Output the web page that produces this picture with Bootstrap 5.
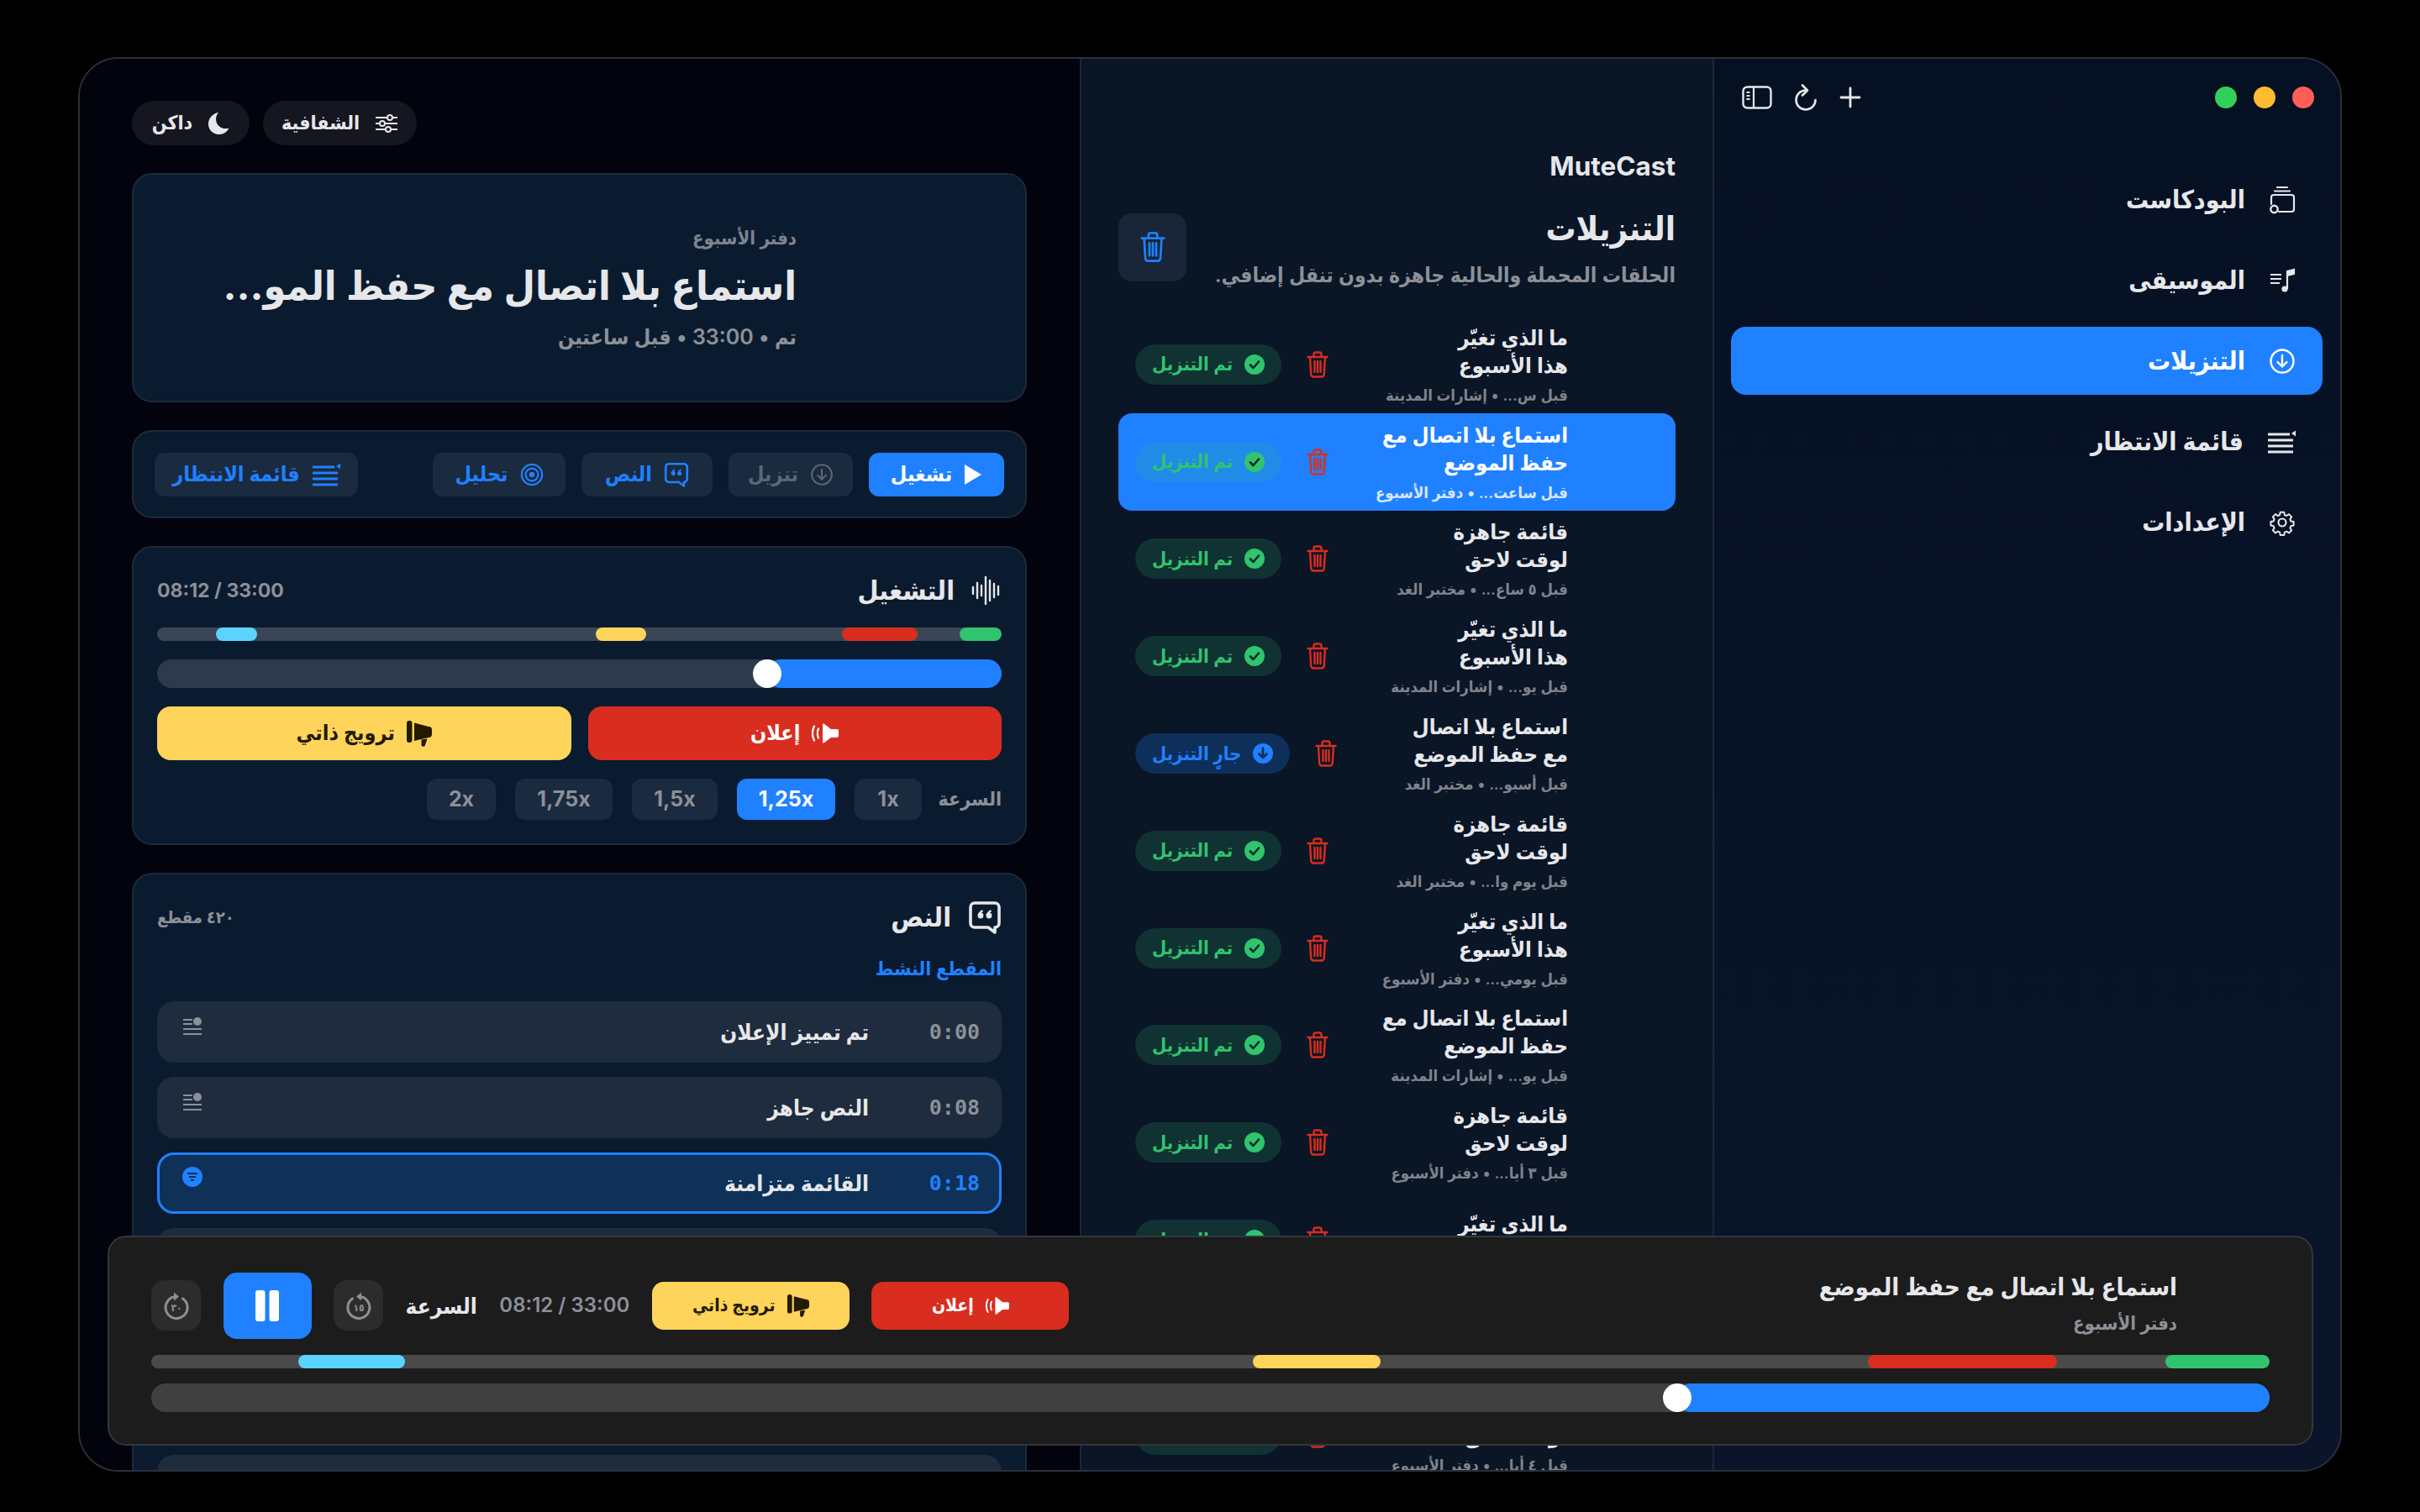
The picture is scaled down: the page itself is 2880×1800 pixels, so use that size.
<!DOCTYPE html>
<html lang="ar" dir="rtl">
<head>
  <meta charset="UTF-8">
  <meta name="viewport" content="width=device-width, initial-scale=1.0">
  <title>MuteCast - التنزيلات</title>
  <link href="https://cdn.jsdelivr.net/npm/bootstrap@5.3.2/dist/css/bootstrap.min.css" rel="stylesheet">
  <style>
    html, body { height: 100%; }
    body {
      background: #000;
      color: #e6e7ea;
      font-family: Inter, "DejaVu Sans Condensed", "DejaVu Sans", sans-serif;
      padding: 68px 93px 48px 93px;
      overflow: hidden;
    }
    svg.ico { display: block; flex: none; }
    .app-window {
      position: relative;
      height: 100%;
      border: 2px solid #2c2f3a;
      border-radius: 48px;
      overflow: hidden;
      background: #02030c;
    }

    /* sidebar */
    .side-col {
      width: 747px;
      flex: none;
      background: linear-gradient(180deg, #061023, #0a152b);
      border-left: 2px solid #1c2636;
      padding: 26px 21px 0 20px;
    }
    .win-bar { height: 40px; padding: 0 10px 0 13px; margin-bottom: 61px; }
    .win-lights { gap: 20px; }
    .win-tools { gap: 26px; color: #e6e7ea; }
    .light { width: 26px; height: 26px; border-radius: 50%; }
    .light.red { background: #ff5f57; }
    .light.amber { background: #febc2e; }
    .light.lime { background: #32d05a; }
    .nav-entry {
      height: 81px;
      border-radius: 18px;
      padding-right: 32px;
      gap: 28px;
      font-size: 30px;
      font-weight: 700;
      color: #e6e7ea;
      text-decoration: none;
      margin-bottom: 15px;
    }
    .nav-entry.current { background: #1f81ff; color: #fff; }

    /* downloads */
    .list-col {
      width: 753px;
      flex: none;
      background: #0a1526;
      border-left: 2px solid #1c2636;
      padding: 110px 44px 0 44px;
      overflow: hidden;
    }
    .brand { font-size: 31.5px; font-weight: 700; line-height: 36px; direction: ltr; text-align: right; color: #e6e7ea; }
    .list-head { margin-top: 30px; margin-bottom: 34px; }
    .list-title { font-size: 40px; font-weight: 700; line-height: 52px; margin: 0; }
    .list-sub { font-size: 24.6px; font-weight: 600; color: #8c9098; margin: 14px 0 0; line-height: 30px; white-space: nowrap; }
    .clear-btn { width: 81px; height: 81px; border-radius: 16px; background: #1a2537; color: #1f81ff; border: 0; padding: 0; }
    .dl-row {
      height: 115.8px;
      padding: 0 128px 0 20px;
      border-radius: 16px;
    }
    .dl-row.current { background: #1f81ff; }
    .dl-text { flex: 1 1 0; min-width: 0; }
    .dl-name { font-size: 25.5px; font-weight: 700; line-height: 33px; color: #e6e7ea; }
    .dl-meta { font-size: 18.5px; font-weight: 600; line-height: 26px; color: #7f838c; margin-top: 6px; white-space: nowrap; }
    .current .dl-name { color: #fff; }
    .current .dl-meta { color: #d7e6ff; }
    .dl-trash { color: #d92d1f; margin: 0 20px 0 30px; }
    .state-pill {
      height: 48px;
      border-radius: 24px;
      padding: 0 20px;
      gap: 14px;
      font-size: 22px;
      font-weight: 600;
      white-space: nowrap;
    }
    .state-pill.done { background: rgba(48, 196, 111, .17); color: #30c46f; }
    .state-pill.busy { background: #0d2f5a; color: #1f81ff; }

    /* player column */
    .player-col { flex: 1 1 0; min-width: 0; padding: 50px 63px 0 62px; background: #02030c; overflow: hidden; gap: 33px; }
    .toggle-row { gap: 16px; justify-content: flex-end; }
    .mini-toggle {
      height: 53px;
      min-width: 140px;
      border-radius: 27px;
      background: #15161f;
      color: #e6e7ea;
      border: 0;
      padding: 0 22px;
      gap: 18px;
      font-size: 23px;
      font-weight: 700;
      justify-content: center;
    }
    .panel { background: #0b1b2f; border: 2px solid #1b2a3c; border-radius: 24px; color: inherit; flex: none; }
    .hero-panel { height: 273px; padding-right: 272px; }
    .hero-kicker { font-size: 22px; font-weight: 600; color: #7f838c; line-height: 30px; }
    .hero-title { font-size: 48px; font-weight: 700; line-height: 60px; margin: 12px 0 14px; white-space: nowrap; }
    .hero-meta { font-size: 25px; font-weight: 600; color: #8c9098; line-height: 34px; }
    .action-panel { height: 105px; padding: 0 25px; gap: 19px; }
    .act-btn {
      height: 52px;
      border-radius: 12px;
      background: #1a2a3f;
      color: #1f81ff;
      border: 0;
      padding: 0;
      gap: 14px;
      font-size: 25px;
      font-weight: 700;
      justify-content: center;
    }
    .act-btn.primary { background: #1f81ff; color: #fff; width: 161px; }
    .act-btn.muted { color: #5b6676; width: 148px; }
    .act-btn.w-text { width: 156px; }
    .act-btn.w-scan { width: 158px; }
    .act-btn.w-queue { width: 242px; }
    .pane-pad { padding: 28px 28px 0; }
    .playback-panel { height: 356px; }
    .transcript-panel { padding-bottom: 40px; }
    .pane-head { margin-bottom: 21px; }
    .pane-title { font-size: 32px; font-weight: 700; line-height: 46px; gap: 20px; margin: 0; }
    .clock { font-size: 23px; font-weight: 700; color: #8c9098; direction: ltr; white-space: nowrap; }
    .marks { position: relative; height: 16px; border-radius: 8px; background: #3a4656; overflow: hidden; }
    .mark { position: absolute; top: 0; bottom: 0; border-radius: 8px; }
    .scrub { position: relative; height: 34px; border-radius: 17px; background: #2e3a4c; }
    .scrub-fill { position: absolute; top: 0; bottom: 0; right: 0; border-radius: 17px; background: #1f81ff; }
    .scrub-knob { position: absolute; top: 0; width: 34px; height: 34px; margin-left: -17px; border-radius: 50%; background: #fff; }
    .playback-panel .scrub, .skip-pair, .speed-row { margin-top: 22px; }
    .skip-pair { gap: 20px; }
    .skip-btn {
      border: 0;
      border-radius: 16px;
      gap: 14px;
      font-size: 25px;
      font-weight: 700;
      flex: 1 1 0;
      height: 64px;
    }
    .skip-btn.ad { background: #d92d1f; color: #fff; }
    .skip-btn.promo { background: #ffd45a; color: #241a00; }
    .speed-row { gap: 23px; }
    .speed-label { font-size: 23px; font-weight: 600; color: #8c9098; width: 72px; white-space: nowrap; }
    .speed-btn {
      height: 49px;
      border: 0;
      border-radius: 12px;
      background: #1a2a3f;
      color: #8c9098;
      font-size: 25px;
      font-weight: 700;
      padding: 0;
      direction: ltr;
    }
    .speed-btn.on { background: #1f81ff; color: #fff; }
    .speed-btn.s1 { width: 80px; }
    .speed-btn.s2 { width: 117px; }
    .speed-btn.s3 { width: 102px; }
    .speed-btn.s4 { width: 116px; }
    .speed-btn.s5 { width: 82px; }
    .seg-count { font-size: 20px; font-weight: 700; color: #8c9098; }
    .seg-active { font-size: 23px; font-weight: 600; color: #1f81ff; line-height: 30px; margin: 23px 0 24px; }
    .seg-row {
      height: 73px;
      border-radius: 20px;
      background: #1e2c3d;
      padding: 0 26px;
      margin-bottom: 17px;
      position: relative;
    }
    .seg-row.on { background: #0f3057; outline: 3px solid #1f81ff; outline-offset: -3px; }
    .seg-time { font-family: "DejaVu Sans Mono", monospace; font-size: 25px; font-weight: 700; color: #8c9098; width: 132px; direction: ltr; text-align: right; flex: none; }
    .seg-row.on .seg-time { color: #1f81ff; }
    .seg-text { font-size: 26px; font-weight: 700; }
    .seg-ico { margin-right: auto; margin-top: -16px; margin-left: 4px; color: #8c9098; }
    .seg-row.on .seg-ico { color: #1f81ff; }

    /* floating now playing bar */
    .now-bar {
      position: absolute;
      left: 33px;
      right: 32px;
      bottom: 29px;
      height: 250px;
      background: #1c1c1c;
      border: 2px solid #33363d;
      border-radius: 22px;
      padding: 41px 50px 0;
    }
    .now-top { height: 80px; margin-bottom: 19px; padding-right: 110px; }
    .now-text { margin-bottom: 6px; }
    .now-title { font-size: 29px; font-weight: 700; line-height: 40px; white-space: nowrap; }
    .now-sub { font-size: 22px; font-weight: 600; color: #8c9098; line-height: 30px; margin-top: 8px; }
    .now-ctrls { margin-right: auto; gap: 26.5px; }
    .now-ctrls .skip-btn { flex: none; width: 235px; height: 57px; font-size: 21px; border-radius: 14px; }
    .now-speed { font-size: 26px; font-weight: 700; }
    .now-ctrls .clock { font-size: 24px; font-weight: 600; }
    .jump-btn { width: 59px; height: 60px; border: 0; padding: 0; border-radius: 16px; background: #2c2c2c; color: #8f8f8f; }
    .jump-btn text { font-size: 12px; font-weight: 700; fill: currentColor; }
    .pause-btn { width: 105px; height: 79px; border: 0; padding: 0; border-radius: 16px; background: #1f81ff; color: #fff; }
    .now-bar .marks { background: #4a4a4a; margin-bottom: 18px; }
    .now-bar .scrub { background: #404040; }
  </style>
</head>
<body>

  <svg width="0" height="0" class="position-absolute">
    <symbol id="i-side" viewBox="0 0 36 28"><rect x="1.5" y="1.5" width="33" height="25" rx="5" fill="none" stroke="currentColor" stroke-width="2.4"/><path d="M14 2v24M5.5 8h4M5.5 12h4M5.5 16h4" fill="none" stroke="currentColor" stroke-width="2.2"/></symbol>
    <symbol id="i-reload" viewBox="0 0 28 32"><path d="M14 7.500A11.500 11.500 0 1 0 25.500 19" fill="none" stroke="currentColor" stroke-width="2.600" stroke-linecap="round"/><path d="M10 1.500l6 6-6 6" fill="none" stroke="currentColor" stroke-width="2.600" stroke-linecap="round" stroke-linejoin="round"/></symbol>
    <symbol id="i-plus" viewBox="0 0 26 26"><path d="M13 2v22M2 13h22" fill="none" stroke="currentColor" stroke-width="2.8" stroke-linecap="round"/></symbol>
    <symbol id="i-podcast" viewBox="0 0 32 34"><path d="M10 2h12M7 6.5h18M12 31h15a3 3 0 0 0 3-3V14a3 3 0 0 0-3-3H6a3 3 0 0 0-3 3v8" fill="none" stroke="currentColor" stroke-width="2.2" stroke-linecap="round"/><circle cx="6.5" cy="28" r="4.2" fill="none" stroke="currentColor" stroke-width="2.4"/></symbol>
    <symbol id="i-music" viewBox="0 0 32 32"><path d="M2 9h13M2 14h13M2 19h11" fill="none" stroke="currentColor" stroke-width="2.2"/><path d="M22 26V5l8-2v5l-8 2" fill="currentColor" stroke="currentColor" stroke-width="2.2"/><circle cx="19" cy="26" r="3.6" fill="currentColor"/></symbol>
    <symbol id="i-down" viewBox="0 0 32 32"><circle cx="16" cy="16" r="13.5" fill="none" stroke="currentColor" stroke-width="2.4"/><path d="M16 9v13M10.5 17l5.5 5.5 5.5-5.5" fill="none" stroke="currentColor" stroke-width="2.4" stroke-linecap="round" stroke-linejoin="round"/></symbol>
    <symbol id="i-queue" viewBox="0 0 34 30"><path d="M1 6h26M1 13h30M1 20h30M1 27h30" fill="none" stroke="currentColor" stroke-width="2.8"/><path d="M29 5l5-3.500v7z" fill="currentColor"/></symbol>
    <symbol id="i-gear" viewBox="0 0 24 24"><path d="M10.3 2.8h3.4l.5 2.5 1.7.7 2.1-1.4 2.4 2.4-1.4 2.1.7 1.7 2.5.5v3.4l-2.5.5-.7 1.7 1.4 2.1-2.4 2.4-2.1-1.4-1.7.7-.5 2.5h-3.4l-.5-2.5-1.7-.7-2.1 1.4-2.4-2.4 1.4-2.1-.7-1.7-2.5-.5v-3.4l2.5-.5.7-1.7-1.4-2.1 2.4-2.4 2.1 1.4 1.7-.7z" fill="none" stroke="currentColor" stroke-width="1.5" stroke-linejoin="round"/><circle cx="12" cy="12" r="3.4" fill="none" stroke="currentColor" stroke-width="1.6"/></symbol>
    <symbol id="i-sliders" viewBox="0 0 28 24"><path d="M1 5h26M1 12h26M1 19h26" fill="none" stroke="currentColor" stroke-width="2"/><circle cx="18" cy="5" r="3" fill="#15161f" stroke="currentColor" stroke-width="2"/><circle cx="9" cy="12" r="3" fill="#15161f" stroke="currentColor" stroke-width="2"/><circle cx="16" cy="19" r="3" fill="#15161f" stroke="currentColor" stroke-width="2"/></symbol>
    <symbol id="i-moon" viewBox="0 0 26 28"><path d="M13 1C6 2 1 7.500 1 14.500 1 21.800 6.800 27 13.800 27c5.200 0 9.700-3 11.700-7.500-1.200.4-2.500.6-3.800.6C15 20.100 10 15 10 8.700 10 6 11 3.200 13 1z" fill="currentColor"/></symbol>
    <symbol id="i-play" viewBox="0 0 22 26"><path d="M1 1l20 12L1 25z" fill="currentColor"/></symbol>
    <symbol id="i-quote" viewBox="0 0 40 40"><path d="M8 3h24a5 5 0 0 1 5 5v19a5 5 0 0 1-5 5v6l-8-6H8a5 5 0 0 1-5-5V8a5 5 0 0 1 5-5z" fill="none" stroke="currentColor" stroke-width="3.600" stroke-linejoin="round"/><circle cx="15" cy="18" r="3.400" fill="currentColor"/><circle cx="25" cy="18" r="3.400" fill="currentColor"/><path d="M17.500 12c-2 1-4 3-5 6M27.500 12c-2 1-4 3-5 6" fill="none" stroke="currentColor" stroke-width="2.400"/></symbol>
    <symbol id="i-target" viewBox="0 0 30 30"><circle cx="15" cy="15" r="13" fill="none" stroke="currentColor" stroke-width="2.400"/><circle cx="15" cy="15" r="8" fill="none" stroke="currentColor" stroke-width="2.400"/><circle cx="15" cy="15" r="3.400" fill="currentColor"/></symbol>
    <symbol id="i-wave" viewBox="0 0 36 36"><path d="M2 14v8M7 9v18M12 12v12M17 2v32M22 6v24M27 10v16M32 13v10" fill="none" stroke="currentColor" stroke-width="2.400" stroke-linecap="round"/></symbol>
    <symbol id="i-ad" viewBox="0 0 32 24"><path d="M13 1.500c0-1 1-1.400 1.800-.8L23 7h7a2 2 0 0 1 2 2v6a2 2 0 0 1-2 2h-7l-8.200 6.300c-.8.600-1.800.200-1.800-.8z" fill="currentColor"/><path d="M8 6.500c-1.500 3.500-1.500 7.500 0 11M3 3.500c-2.700 5.500-2.700 11.500 0 17" fill="none" stroke="currentColor" stroke-width="2.200" stroke-linecap="round"/></symbol>
    <symbol id="i-promo" viewBox="0 0 30 32"><rect x="0" y="1" width="6.500" height="26" rx="3" fill="currentColor"/><path d="M9 3.500L26 8a4 4 0 0 1 4 4v5a4 4 0 0 1-4 4L9 25z" fill="currentColor"/><path d="M17.500 23.500l7-1-2.500 7.500a2.300 2.300 0 0 1-4.500-1z" fill="currentColor"/></symbol>
    <symbol id="i-trash" viewBox="0 0 26 32"><path d="M1.500 7h23M8.500 7V3.500A2 2 0 0 1 10.500 1.500h5a2 2 0 0 1 2 2V7M4 7l1.200 20.500A3 3 0 0 0 8.200 30.500h9.600a3 3 0 0 0 3-3L22 7M9.500 12v13M13 12v13M16.500 12v13" fill="none" stroke="currentColor" stroke-width="2.400" stroke-linecap="round" stroke-linejoin="round"/></symbol>
    <symbol id="i-check" viewBox="0 0 24 24"><circle cx="12" cy="12" r="12" fill="currentColor"/><path d="M7 12.500l3.500 3.500L17 8.500" fill="none" stroke="#0c2a26" stroke-width="2.600" stroke-linecap="round" stroke-linejoin="round"/></symbol>
    <symbol id="i-busy" viewBox="0 0 24 24"><circle cx="12" cy="12" r="12" fill="currentColor"/><path d="M12 6v11M7.500 12.500L12 17l4.500-4.500" fill="none" stroke="#0d2f5a" stroke-width="2.800" stroke-linecap="round" stroke-linejoin="round"/></symbol>
    <symbol id="i-seg" viewBox="0 0 24 24"><path d="M1 5h11M1 10h11M1 16h22M1 22h22" fill="none" stroke="currentColor" stroke-width="2"/><circle cx="18" cy="7" r="5" fill="currentColor"/></symbol>
    <symbol id="i-seg-on" viewBox="0 0 24 24"><circle cx="12" cy="12" r="12" fill="currentColor"/><path d="M6 8h12M8 12h8M10 16h4" fill="none" stroke="#0f3057" stroke-width="2"/></symbol>
    <symbol id="i-pause" viewBox="0 0 28 37"><rect x="0" y="0" width="11.500" height="37" rx="3" fill="currentColor"/><rect x="16.500" y="0" width="11.500" height="37" rx="3" fill="currentColor"/></symbol>
    <symbol id="i-ring-fwd" viewBox="0 0 32 34"><path d="M16 6.500A13 13 0 1 0 22.500 8.200" fill="none" stroke="currentColor" stroke-width="3"/><path d="M13 1.500l6 5-6 5z" fill="currentColor"/></symbol>
    <symbol id="i-ring-back" viewBox="0 0 32 34"><path d="M16 6.500A13 13 0 1 1 9.500 8.200" fill="none" stroke="currentColor" stroke-width="3"/><path d="M19 1.500l-6 5 6 5z" fill="currentColor"/></symbol>
  </svg>

  <div class="app-window d-flex">

    <aside class="side-col">
      <div class="win-bar d-flex align-items-center justify-content-between">
        <div class="win-lights d-flex">
          <span class="light red"></span>
          <span class="light amber"></span>
          <span class="light lime"></span>
        </div>
        <div class="win-tools d-flex align-items-center">
          <svg class="ico" width="26" height="26"><use href="#i-plus"/></svg>
          <svg class="ico" width="28" height="32"><use href="#i-reload"/></svg>
          <svg class="ico" width="36" height="28"><use href="#i-side"/></svg>
        </div>
      </div>
      <nav class="d-flex flex-column" id="sideNav"></nav>
    </aside>

    <section class="list-col">
      <div class="brand">MuteCast</div>
      <div class="list-head d-flex align-items-center justify-content-between">
        <div>
          <h1 class="list-title">التنزيلات</h1>
          <p class="list-sub">الحلقات المحملة والحالية جاهزة بدون تنقل إضافي.</p>
        </div>
        <button class="clear-btn d-flex align-items-center justify-content-center" type="button" aria-label="حذف">
          <svg class="ico" width="30" height="38"><use href="#i-trash"/></svg>
        </button>
      </div>
      <div id="dlList"></div>
    </section>

    <main class="player-col d-flex flex-column">
      <div class="toggle-row d-flex">
        <button class="mini-toggle d-flex align-items-center" type="button">
          <svg class="ico" width="28" height="24"><use href="#i-sliders"/></svg>الشفافية
        </button>
        <button class="mini-toggle d-flex align-items-center" type="button">
          <svg class="ico" width="26" height="28"><use href="#i-moon"/></svg>داكن
        </button>
      </div>

      <div class="panel hero-panel d-flex flex-column justify-content-center">
        <div class="hero-kicker">دفتر الأسبوع</div>
        <div class="hero-title">استماع بلا اتصال مع حفظ المو...</div>
        <div class="hero-meta">تم • 33:00 • قبل ساعتين</div>
      </div>

      <div class="panel action-panel d-flex align-items-center">
        <button class="act-btn primary d-flex align-items-center" type="button"><svg class="ico" width="22" height="26"><use href="#i-play"/></svg>تشغيل</button>
        <button class="act-btn muted d-flex align-items-center" type="button"><svg class="ico" width="28" height="28"><use href="#i-down"/></svg>تنزيل</button>
        <button class="act-btn w-text d-flex align-items-center" type="button"><svg class="ico" width="30" height="30"><use href="#i-quote"/></svg>النص</button>
        <button class="act-btn w-scan d-flex align-items-center" type="button"><svg class="ico" width="28" height="28"><use href="#i-target"/></svg>تحليل</button>
        <button class="act-btn w-queue d-flex align-items-center me-auto" type="button"><svg class="ico" width="34" height="30"><use href="#i-queue"/></svg>قائمة الانتظار</button>
      </div>

      <div class="panel playback-panel pane-pad">
        <div class="pane-head d-flex align-items-center justify-content-between">
          <h2 class="pane-title d-flex align-items-center"><svg class="ico" width="36" height="36"><use href="#i-wave"/></svg>التشغيل</h2>
          <span class="clock">08:12 / 33:00</span>
        </div>
        <div class="marks" data-total="1003" data-marks="0,50;100,90;422,60;884,49"></div>
        <div class="scrub" data-pos="27.8"></div>
        <div class="skip-pair d-flex">
          <button class="skip-btn ad d-flex align-items-center justify-content-center" type="button"><svg class="ico" width="32" height="24"><use href="#i-ad"/></svg>إعلان</button>
          <button class="skip-btn promo d-flex align-items-center justify-content-center" type="button"><svg class="ico" width="30" height="32"><use href="#i-promo"/></svg>ترويج ذاتي</button>
        </div>
        <div class="speed-row d-flex align-items-center">
          <span class="speed-label">السرعة</span>
          <button class="speed-btn s1" type="button">1x</button>
          <button class="speed-btn s2 on" type="button">1,25x</button>
          <button class="speed-btn s3" type="button">1,5x</button>
          <button class="speed-btn s4" type="button">1,75x</button>
          <button class="speed-btn s5" type="button">2x</button>
        </div>
      </div>

      <div class="panel pane-pad transcript-panel">
        <div class="d-flex align-items-center justify-content-between">
          <h2 class="pane-title d-flex align-items-center"><svg class="ico" width="40" height="40"><use href="#i-quote"/></svg>النص</h2>
          <span class="seg-count">٤٢٠ مقطع</span>
        </div>
        <div class="seg-active">المقطع النشط</div>
        <div id="segList"></div>
      </div>
    </main>

    <div class="now-bar">
      <div class="now-top d-flex align-items-center">
        <div class="now-text">
          <div class="now-title">استماع بلا اتصال مع حفظ الموضع</div>
          <div class="now-sub">دفتر الأسبوع</div>
        </div>
        <div class="now-ctrls d-flex align-items-center">
          <button class="skip-btn ad d-flex align-items-center justify-content-center" type="button"><svg class="ico" width="28" height="21"><use href="#i-ad"/></svg>إعلان</button>
          <button class="skip-btn promo d-flex align-items-center justify-content-center" type="button"><svg class="ico" width="26" height="28"><use href="#i-promo"/></svg>ترويج ذاتي</button>
          <span class="clock">08:12 / 33:00</span>
          <span class="now-speed">السرعة</span>
          <button class="jump-btn d-flex align-items-center justify-content-center" type="button" aria-label="15">
            <svg class="ico" width="32" height="34" viewBox="0 0 32 34"><use href="#i-ring-back"/><text x="16" y="24" text-anchor="middle">١٥</text></svg>
          </button>
          <button class="pause-btn d-flex align-items-center justify-content-center" type="button" aria-label="إيقاف"><svg class="ico" width="28" height="37"><use href="#i-pause"/></svg></button>
          <button class="jump-btn d-flex align-items-center justify-content-center" type="button" aria-label="30">
            <svg class="ico" width="32" height="34" viewBox="0 0 32 34"><use href="#i-ring-fwd"/><text x="16" y="24" text-anchor="middle">٣٠</text></svg>
          </button>
        </div>
      </div>
      <div class="marks" data-total="2520" data-marks="0,124;253,225;1058,152;2218,127"></div>
      <div class="scrub" data-pos="27.97"></div>
    </div>

  </div>

  <script src="https://cdn.jsdelivr.net/npm/bootstrap@5.3.2/dist/js/bootstrap.bundle.min.js"></script>
  <script>
    const use = (id, w, h) => `<svg class="ico" width="${w}" height="${h}"><use href="#${id}"/></svg>`;

    const nav = [
      ['i-podcast', 'البودكاست', 32, 34],
      ['i-music', 'الموسيقى', 32, 32],
      ['i-down', 'التنزيلات', 32, 32],
      ['i-queue', 'قائمة الانتظار', 34, 30],
      ['i-gear', 'الإعدادات', 32, 32]
    ];
    document.getElementById('sideNav').innerHTML = nav.map((n, i) =>
      `<a href="#" class="nav-entry d-flex align-items-center${i === 2 ? ' current' : ''}">${use(n[0], n[2], n[3])}<span>${n[1]}</span></a>`
    ).join('');

    const titles = {
      a: 'ما الذي تغيّر<br>هذا الأسبوع',
      b: 'استماع بلا اتصال مع<br>حفظ الموضع',
      c: 'قائمة جاهزة<br>لوقت لاحق',
      d: 'استماع بلا اتصال<br>مع حفظ الموضع'
    };
    const downloads = [
      ['a', 'قبل س... • إشارات المدينة'],
      ['b', 'قبل ساعت... • دفتر الأسبوع'],
      ['c', 'قبل ٥ ساع... • مختبر الغد'],
      ['a', 'قبل يو... • إشارات المدينة'],
      ['d', 'قبل أسبو... • مختبر الغد', true],
      ['c', 'قبل يوم وا... • مختبر الغد'],
      ['a', 'قبل يومي... • دفتر الأسبوع'],
      ['b', 'قبل يو... • إشارات المدينة'],
      ['c', 'قبل ٣ أيا... • دفتر الأسبوع'],
      ['a', ''],
      ['b', ''],
      ['c', 'قبل ٤ أيا... • دفتر الأسبوع']
    ];
    document.getElementById('dlList').innerHTML = downloads.map((d, i) => `
      <div class="dl-row d-flex align-items-center${i === 1 ? ' current' : ''}">
        <div class="dl-text">
          <div class="dl-name">${titles[d[0]]}</div>
          <div class="dl-meta">${d[1]}</div>
        </div>
        <svg class="ico dl-trash" width="26" height="32"><use href="#i-trash"/></svg>
        <span class="state-pill d-flex align-items-center ${d[2] ? 'busy' : 'done'}">${use(d[2] ? 'i-busy' : 'i-check', 24, 24)}${d[2] ? 'جارٍ التنزيل' : 'تم التنزيل'}</span>
      </div>`).join('');

    // rows 4 to 7 sit behind the player bar or below the window, only their boxes show
    const segments = [
      ['0:00', 'تم تمييز الإعلان'],
      ['0:08', 'النص جاهز'],
      ['0:18', 'القائمة متزامنة', true],
      [], [], [], []
    ];
    document.getElementById('segList').innerHTML = segments.map(s => `
      <div class="seg-row d-flex align-items-center${s[2] ? ' on' : ''}">
        ${s.length ? `<span class="seg-time">${s[0]}</span><span class="seg-text">${s[1]}</span>
        <svg class="ico seg-ico" width="24" height="24"><use href="#${s[2] ? 'i-seg-on' : 'i-seg'}"/></svg>` : ''}
      </div>`).join('');

    // marker bars: "from right,width" pairs in px of the bar's full width
    const colours = ['#30c46f', '#d92d1f', '#ffd45a', '#5ad4ff'];
    document.querySelectorAll('.marks').forEach(bar => {
      const total = Number(bar.dataset.total);
      bar.innerHTML = bar.dataset.marks.split(';').map((part, i) => {
        const [start, size] = part.split(',').map(Number);
        return `<span class="mark" style="right:${start / total * 100}%;width:${size / total * 100}%;background:${colours[i]}"></span>`;
      }).join('');
    });

    document.querySelectorAll('.scrub').forEach(bar => {
      const pos = Number(bar.dataset.pos);
      bar.innerHTML = `<div class="scrub-fill" style="width:${pos}%"></div><div class="scrub-knob" style="left:${100 - pos}%"></div>`;
    });
  </script>
</body>
</html>
